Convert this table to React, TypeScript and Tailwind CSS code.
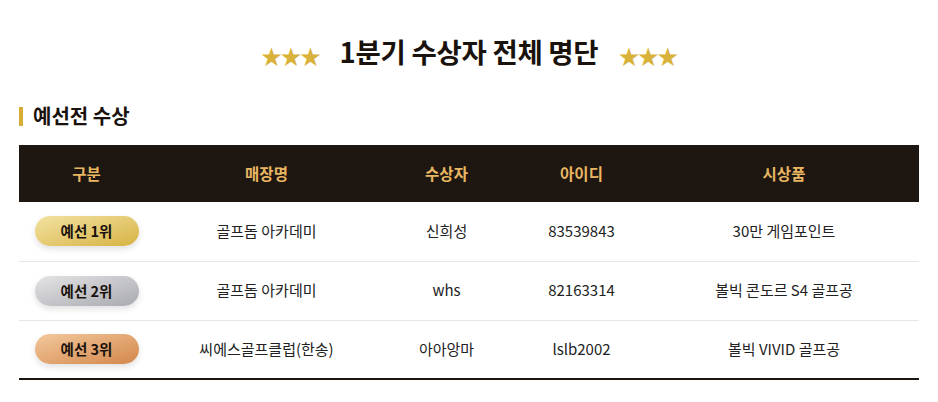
import React from "react";

type Winner = { rank: string; tone: "gold" | "silver" | "bronze"; store: string; name: string; id: string; prize: string };

const winners: Winner[] = [
  { rank: "예선 1위", tone: "gold", store: "골프돔 아카데미", name: "신희성", id: "83539843", prize: "30만 게임포인트" },
  { rank: "예선 2위", tone: "silver", store: "골프돔 아카데미", name: "whs", id: "82163314", prize: "볼빅 콘도르 S4 골프공" },
  { rank: "예선 3위", tone: "bronze", store: "씨에스골프클럽(한송)", name: "아아앙마", id: "lslb2002", prize: "볼빅 VIVID 골프공" },
];

const badgeTone = {
  gold: "bg-gradient-to-br from-[#f2e2a0] to-[#d7b33f]",
  silver: "bg-gradient-to-br from-[#e4e4e6] to-[#a9aab0]",
  bronze: "bg-gradient-to-br from-[#f2c89c] to-[#d3874a]",
};

const cols = ["w-[15%]", "w-[25%]", "w-[15%]", "w-[15%]", "w-[30%]"];

export default function App() {
  return (
    <div className="min-h-[402px] bg-white px-[19px] pt-[35px] text-[#1a1a1a] font-['Noto_Sans_CJK_KR','Noto_Sans',sans-serif]">
      {/* title */}
      <div className="flex items-center justify-center gap-[20px]">
        <span className="text-[21px] leading-none tracking-[-1.5px] text-[#d9b23c] mt-[8px]">★★★</span>
        <h1 className="text-[27.5px] font-bold leading-[32px] tracking-[-0.3px] text-[#1a120c]">1분기 수상자 전체 명단</h1>
        <span className="text-[21px] leading-none tracking-[-1.5px] text-[#d9b23c] mt-[8px]">★★★</span>
      </div>

      {/* section heading */}
      <div className="mt-[37px] flex items-center gap-[10px]">
        <span className="w-[4px] h-[19px] bg-[#d6ae35]" />
        <h2 className="text-[20px] font-bold leading-[24px] text-[#1a120c]">예선전 수상</h2>
      </div>

      <table className="mt-[17px] w-full table-fixed border-collapse border-b-2 border-[#1c140e]">
        <thead>
          <tr className="bg-[#1e1610] h-[57px]">
            {["구분", "매장명", "수상자", "아이디", "시상품"].map((h, i) => (
              <th key={h} className={`${cols[i]} text-[15.5px] font-bold text-[#e8b662]`}>
                {h}
              </th>
            ))}
          </tr>
        </thead>
        <tbody>
          {winners.map((w, i) => (
            <tr key={w.id} className={`h-[59px] text-[15px] text-[#222] ${i < winners.length - 1 ? "border-b border-[#e6e6e6]" : ""}`}>
              <td className="text-center">
                <span
                  className={`inline-flex items-center justify-center w-[104px] h-[30px] rounded-full text-[14.5px] font-bold text-[#1a120c] shadow-[0_3px_6px_rgba(0,0,0,0.12)] ${badgeTone[w.tone]}`}
                >
                  {w.rank}
                </span>
              </td>
              <td className="text-center">{w.store}</td>
              <td className="text-center">{w.name}</td>
              <td className="text-center">{w.id}</td>
              <td className="text-center">{w.prize}</td>
            </tr>
          ))}
        </tbody>
      </table>
    </div>
  );
}
